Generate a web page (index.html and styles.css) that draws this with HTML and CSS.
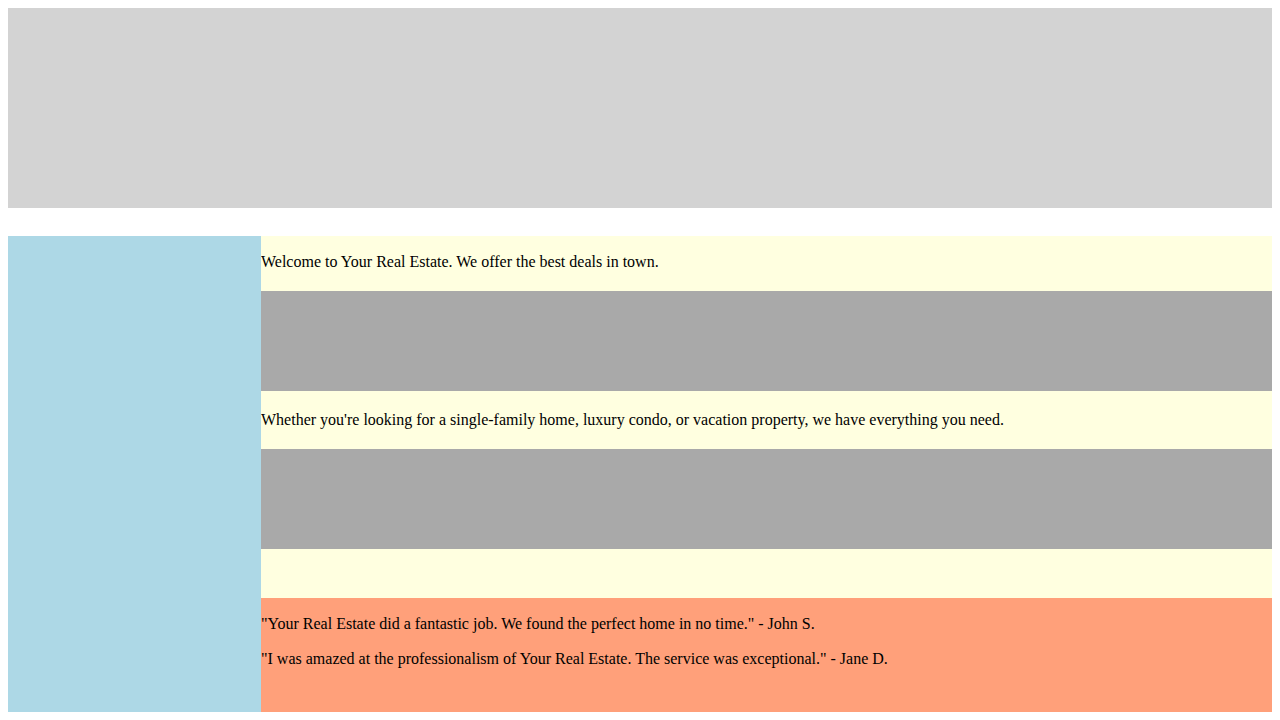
FILE: index.html
```html
<!DOCTYPE html>
<html>
<head>
<meta charset="utf-8">
<title>Your Real Estate</title>
<link rel="stylesheet" href="styles.css">
</head>
<body>
<header class="banner"></header>
<div class="layout">
  <aside class="sidebar"></aside>
  <div class="column">
    <main class="content">
      <p class="text">Welcome to Your Real Estate. We offer the best deals in town.</p>
      <div class="photo"></div>
      <p class="text">Whether you're looking for a single-family home, luxury condo, or vacation property, we have everything you need.</p>
      <div class="photo"></div>
    </main>
    <footer class="reviews">
      <p class="text">"Your Real Estate did a fantastic job. We found the perfect home in no time." - John S.</p>
      <p class="text">"I was amazed at the professionalism of Your Real Estate. The service was exceptional." - Jane D.</p>
    </footer>
  </div>
</div>
</body>
</html>
```
FILE: styles.css
```css
html, body {
  margin: 0;
  padding: 0;
}
body {
  margin: 8px;
  font-family: "Liberation Serif", "Times New Roman", serif;
  font-size: 16px;
  line-height: 19px;
  color: #000;
  background: #fff;
}
.banner {
  height: 200px;
  background: #d3d3d3;
  margin-bottom: 28px;
}
.layout {
  display: flex;
  height: 476px;
}
.sidebar {
  width: 253px;
  flex: 0 0 253px;
  background: #add8e6;
}
.column {
  flex: 1;
  display: flex;
  flex-direction: column;
}
.content {
  background: #ffffe0;
  height: 362px;
  box-sizing: border-box;
  overflow: hidden;
  display: flow-root;
}
.text {
  margin: 16px 0;
}
.photo {
  height: 100px;
  margin: 19.6px 0;
  background: #a9a9a9;
}
.reviews {
  flex: 1;
  background: #ffa07a;
  display: flow-root;
}
```
